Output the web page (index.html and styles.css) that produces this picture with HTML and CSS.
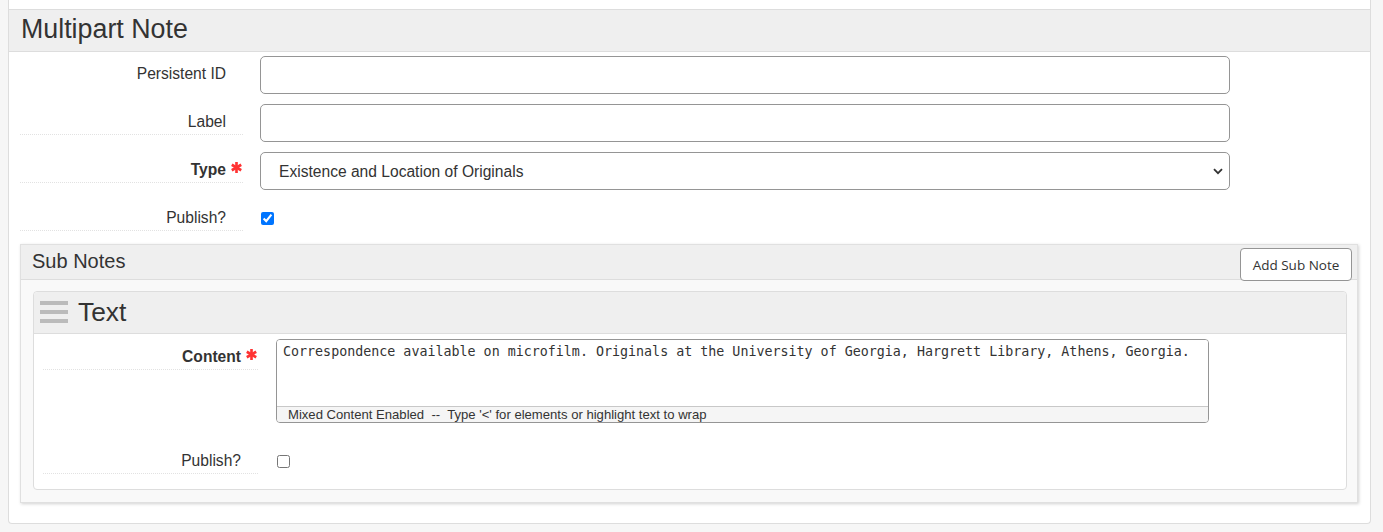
FILE: index.html
```html
<!DOCTYPE html>
<html lang="en">
<head>
<meta charset="utf-8">
<title>Multipart Note</title>
<link rel="stylesheet" href="styles.css">
</head>
<body>
<div class="panel">
  <section class="subform">
    <h3 class="subform-title">Multipart Note</h3>
    <div class="subform-body">
      <div class="row">
        <label class="lbl lbl-plain">Persistent ID</label>
        <div class="ctl"><input class="input" type="text"></div>
      </div>
      <div class="row">
        <label class="lbl">Label</label>
        <div class="ctl"><input class="input" type="text"></div>
      </div>
      <div class="row">
        <label class="lbl lbl-req">Type<span class="req"><svg width="11" height="11" viewBox="0 0 10 10"><g stroke="#f33" stroke-width="2.4" stroke-linecap="butt"><line x1="5" y1="0" x2="5" y2="10"/><line x1="0.7" y1="2.5" x2="9.3" y2="7.5"/><line x1="0.7" y1="7.5" x2="9.3" y2="2.5"/></g></svg></span></label>
        <div class="ctl select-wrap">
          <select class="input select">
            <option>Existence and Location of Originals</option>
          </select>
          <svg class="chev" width="10" height="7" viewBox="0 0 10 7"><path d="M1 1.2 L5 5.2 L9 1.2" fill="none" stroke="#333" stroke-width="1.8"/></svg>
        </div>
      </div>
      <div class="row row-last">
        <label class="lbl">Publish?</label>
        <div class="ctl"><input class="check" type="checkbox" checked></div>
      </div>

      <div class="subnotes">
        <div class="subnotes-head">
          <h4 class="subnotes-title">Sub Notes</h4>
          <button class="btn" type="button">Add Sub Note</button>
        </div>
        <div class="subnotes-body">
          <div class="note">
            <div class="note-head">
              <svg class="drag" width="28" height="22" viewBox="0 0 28 22"><rect x="0" y="0" width="28" height="4" fill="#bbb"/><rect x="0" y="9" width="28" height="4" fill="#bbb"/><rect x="0" y="18" width="28" height="4" fill="#bbb"/></svg>
              <h3 class="note-title">Text</h3>
            </div>
            <div class="note-body">
              <div class="row row-n row-content">
                <label class="lbl lbl-n lbl-req">Content<span class="req"><svg width="11" height="11" viewBox="0 0 10 10"><g stroke="#f33" stroke-width="2.4"><line x1="5" y1="0" x2="5" y2="10"/><line x1="0.7" y1="2.5" x2="9.3" y2="7.5"/><line x1="0.7" y1="7.5" x2="9.3" y2="2.5"/></g></svg></span></label>
                <div class="ctl-n">
                  <div class="editor">
                    <textarea class="editor-text">Correspondence available on microfilm. Originals at the University of Georgia, Hargrett Library, Athens, Georgia.</textarea>
                    <div class="editor-status">Mixed Content Enabled  --  Type '&lt;' for elements or highlight text to wrap</div>
                  </div>
                </div>
              </div>
              <div class="row row-n">
                <label class="lbl lbl-n">Publish?</label>
                <div class="ctl-n"><input class="check check-n" type="checkbox"></div>
              </div>
            </div>
          </div>
        </div>
      </div>
    </div>
  </section>
</div>
</body>
</html>
```

FILE: styles.css
```css
* { box-sizing: border-box; }

html, body {
  margin: 0;
  padding: 0;
}

body {
  background: #f6f6f6;
  font-family: "Liberation Sans", Arial, Helvetica, sans-serif;
  color: #333;
  font-size: 15.6px;
}

.panel {
  margin-left: 8px;
  width: 1363px;
  background: #fff;
  border: 1px solid #ddd;
  border-top: 0;
  border-radius: 0 0 4px 4px;
  padding-top: 9px;
}

.subform-title {
  margin: 0;
  height: 43px;
  border-top: 1px solid #ddd;
  border-bottom: 1px solid #ddd;
  background: #efefef;
  font-size: 26.8px;
  font-weight: normal;
  line-height: 38px;
  padding: 0 0 3px 12px;
  color: #333;
}

.subform-body {
  padding: 4px 0 0 11px;
}

.row {
  display: flex;
  align-items: flex-start;
  margin-bottom: 10px;
}

.row-last { margin-bottom: 13px; }

.lbl {
  flex: 0 0 223px;
  width: 223px;
  text-align: right;
  padding: 8px 17px 2px 0;
  line-height: 20px;
  height: 31px;
  border-bottom: 1px dotted #e2e2e2;
  white-space: nowrap;
}

.lbl-plain { border-bottom-color: transparent; }

.lbl-req { font-weight: bold; }

.req {
  display: inline-block;
  margin-left: 5px;
  margin-right: -16px;
  width: 11px;
  height: 11px;
  vertical-align: 2px;
}

.req svg { display: block; }

.ctl {
  margin-left: 17px;
  width: 970px;
}

.input {
  display: block;
  width: 100%;
  height: 38px;
  border: 1px solid #959595;
  border-radius: 5px;
  background: #fff;
  font-family: "Liberation Sans", Arial, Helvetica, sans-serif;
  font-size: 15.6px;
  color: #333;
  padding: 0 18px;
  outline: none;
}

.select-wrap { position: relative; }

.select {
  appearance: none;
  -webkit-appearance: none;
  padding-left: 18px;
}

.chev {
  position: absolute;
  right: 7px;
  top: 16px;
  pointer-events: none;
}

.check {
  display: block;
  margin: 12px 0 0 1px;
  width: 13px;
  height: 13px;
}

/* Sub notes */
.subnotes {
  width: 1338px;
  border: 1px solid #e0e0e0;
  background: #f9f9f9;
  box-shadow: 1px 1px 3px rgba(0, 0, 0, 0.18);
  margin-bottom: 20px;
}

.subnotes-head {
  height: 35px;
  background: #efefef;
  border-bottom: 1px solid #ddd;
  display: flex;
  justify-content: space-between;
  align-items: flex-start;
  padding: 0 5px 0 11px;
}

.subnotes-title {
  margin: 0;
  padding-top: 1px;
  font-size: 20px;
  line-height: 30px;
  font-weight: normal;
  color: #333;
}

.btn {
  margin-top: 3px;
  height: 33px;
  width: 112px;
  background: #fff;
  border: 1px solid #959595;
  border-radius: 4px;
  font-family: "Open Sans", "Noto Sans", sans-serif;
  font-size: 13.5px;
  color: #333;
  padding: 0;
  position: relative;
}

.subnotes-body {
  padding: 11px 10px 12px 12px;
}

.note {
  width: 1314px;
  background: #fff;
  border: 1px solid #ddd;
  border-radius: 4px;
}

.note-head {
  height: 42px;
  background: #efefef;
  border-bottom: 1px solid #ddd;
  border-radius: 4px 4px 0 0;
  display: flex;
  align-items: flex-start;
  padding-left: 6px;
}

.drag {
  margin-top: 9px;
  margin-right: 10px;
  flex: 0 0 auto;
}

.note-title {
  margin: 0;
  padding-top: 1px;
  font-size: 26.4px;
  line-height: 38px;
  font-weight: normal;
  color: #333;
}

.note-body {
  padding: 5px 0 15px 9px;
}

.row-n { margin-bottom: 0; }

.row-content { margin-bottom: 20px; }

.lbl-n {
  flex: 0 0 215px;
  width: 215px;
}

.ctl-n {
  margin-left: 18px;
  width: 933px;
}

.editor {
  border: 1px solid #959595;
  border-radius: 4px;
  overflow: hidden;
  height: 84px;
  display: flex;
  flex-direction: column;
}

.editor-text {
  display: block;
  height: 66px;
  border: 0;
  margin: 0;
  padding: 3px 6px 2px;
  resize: none;
  font-family: "DejaVu Sans Mono", "Liberation Mono", monospace;
  font-size: 13.33px;
  line-height: 17px;
  color: #333;
  outline: none;
  overflow: hidden;
  width: 100%;
}

.editor-status {
  height: 16px;
  border-top: 1px solid #c8c8c8;
  background: #f5f5f5;
  font-size: 13.1px;
  line-height: 15px;
  padding-left: 11px;
  color: #333;
  white-space: pre;
}

.check-n { margin-left: 1px; }
```
